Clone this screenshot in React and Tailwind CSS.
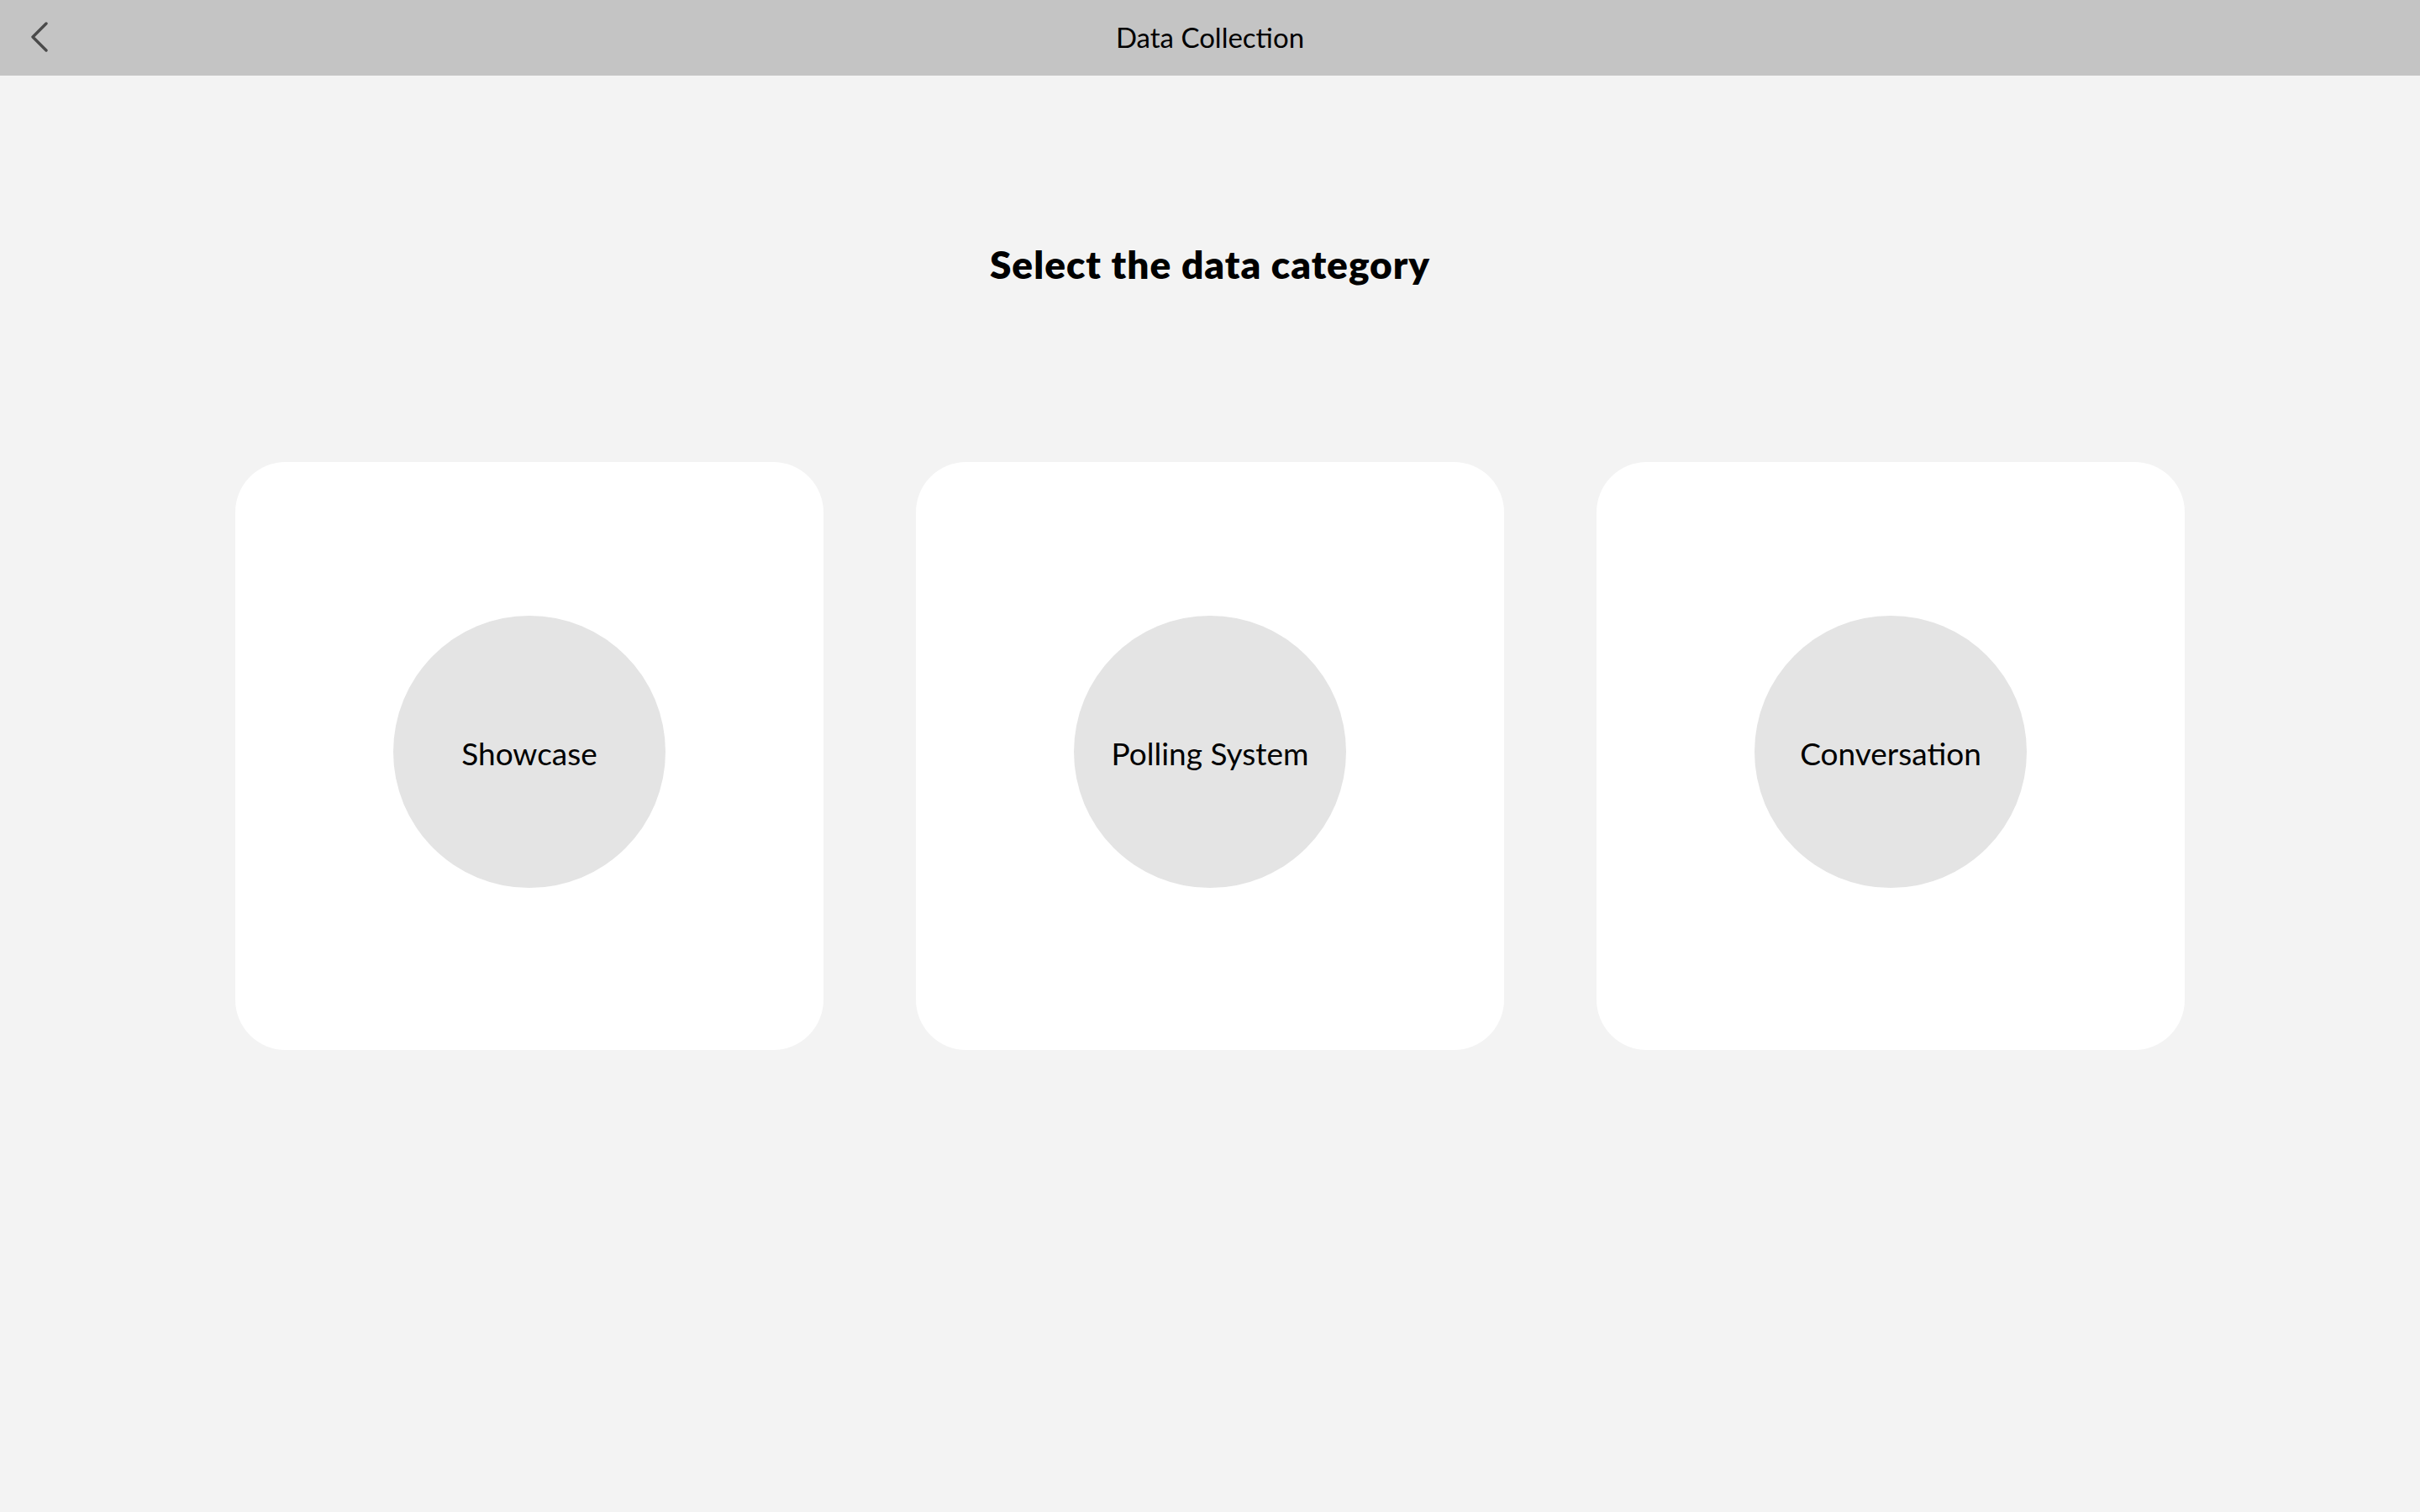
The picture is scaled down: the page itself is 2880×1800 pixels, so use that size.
const categories = ["Showcase", "Polling System", "Conversation"];

const CategoryCard = ({ label }) => {
  return (
    <button className="flex h-[700px] w-[700px] items-center justify-center rounded-[60px] bg-white">
      <div className="-mt-[11px] flex h-[324px] w-[324px] items-center justify-center rounded-full bg-[#e4e4e4]">
        <span className="mt-[4px] text-[37px] text-black">{label}</span>
      </div>
    </button>
  );
};

const App = () => {
  return (
    <div className="flex min-h-screen w-full flex-col bg-[#f3f3f3] font-['Lato',_'Open_Sans',_sans-serif]">
      <header className="relative flex h-[90px] w-full items-center justify-center bg-[#c4c4c4]">
        <button className="absolute left-[36px] top-[26px] text-[#4a4a4a]">
          <svg width="22" height="36" viewBox="0 0 22 36" fill="none">
            <polyline
              points="19,2 3,18 19,34"
              stroke="currentColor"
              strokeWidth="3.4"
              strokeLinecap="round"
              strokeLinejoin="round"
            />
          </svg>
        </button>
        <h1 className="text-[33px] text-black">Data Collection</h1>
      </header>
      <main className="flex flex-col items-center">
        <h2 className="mt-[192px] text-[46px] font-extrabold leading-[66px] tracking-[1px] text-black">
          Select the data category
        </h2>
        <div className="mt-[202px] flex gap-[110px]">
          {categories.map((c) => (
            <CategoryCard key={c} label={c} />
          ))}
        </div>
      </main>
    </div>
  );
};

export default App;
